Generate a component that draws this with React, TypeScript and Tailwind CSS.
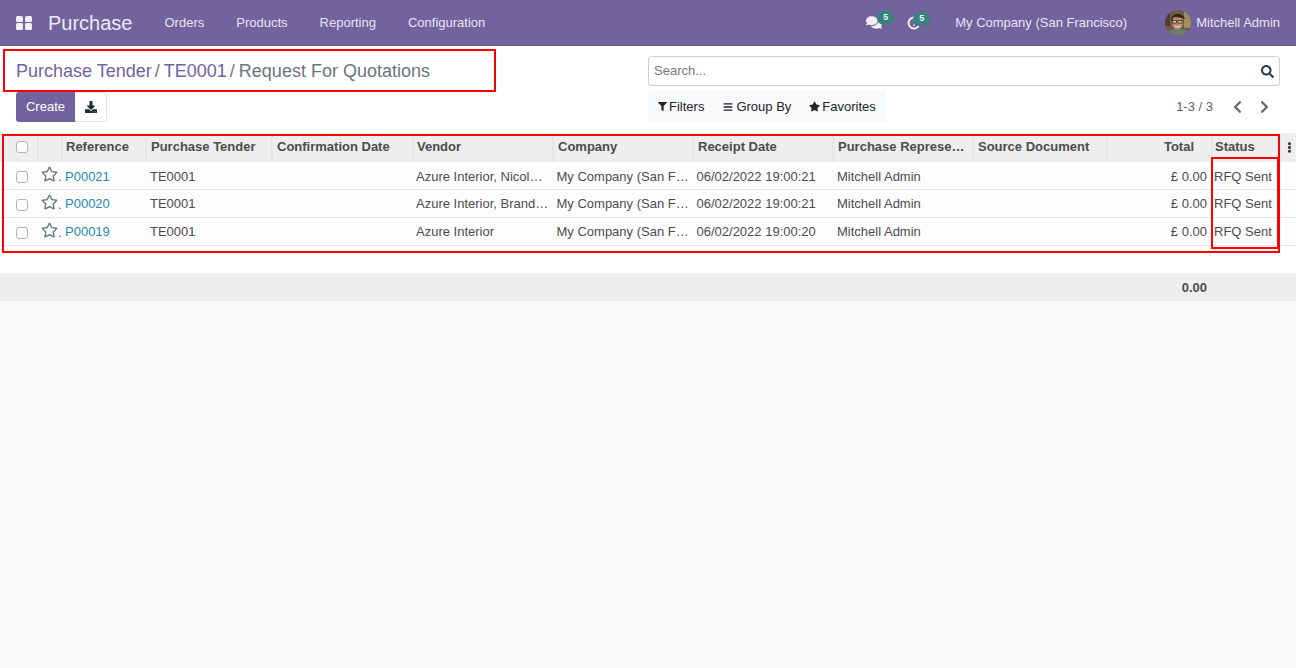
import { FaComments, FaFilter, FaBars, FaStar, FaRegStar, FaSearch, FaDownload, FaChevronLeft, FaChevronRight, FaEllipsisV } from "react-icons/fa";

const cols = [
  { l: "", w: "w-[38px]", c: "" },
  { l: "", w: "w-[24px]", c: "" },
  { l: "Reference", w: "w-[84px]", c: "pl-[3px]" },
  { l: "Purchase Tender", w: "w-[126px]", c: "pl-[4px]" },
  { l: "Confirmation Date", w: "w-[141px]", c: "pl-[4px]" },
  { l: "Vendor", w: "w-[140px]", c: "pl-[3px]" },
  { l: "Company", w: "w-[140px]", c: "pl-[4px]" },
  { l: "Receipt Date", w: "w-[140px]", c: "pl-[4px]" },
  { l: "Purchase Representative", w: "w-[140px]", c: "pl-[4px]" },
  { l: "Source Document", w: "w-[134px]", c: "pl-[4px]" },
  { l: "Total", w: "w-[105px]", c: "pr-[17px] text-right" },
  { l: "Status", w: "w-[67px]", c: "pl-[2px]" },
  { l: "", w: "w-[17px]", c: "" },
];

const rows = [
  { ref: "P00021", vendor: "Azure Interior, Nicole Ford", date: "06/02/2022 19:00:21", h: "h-[27px]" },
  { ref: "P00020", vendor: "Azure Interior, Brandon Freeman", date: "06/02/2022 19:00:21", h: "h-[28px]" },
  { ref: "P00019", vendor: "Azure Interior", date: "06/02/2022 19:00:20", h: "h-[28px]" },
];

function Checkbox() {
  return <span className="block h-3 w-3 rounded-[3px] border border-[#adb5bd] bg-white" />;
}

function Badge({ n, left }: { n: number; left: string }) {
  return (
    <span className={`absolute -top-[4px] ${left} flex h-[14px] w-[17px] items-center justify-center rounded-full bg-[#3b8080] text-[9px] font-bold text-[#e9f2f2]`}>
      {n}
    </span>
  );
}

function Avatar() {
  return (
    <svg viewBox="0 0 26 26" className="h-[26px] w-[26px] shrink-0">
      <clipPath id="av"><circle cx="13" cy="13" r="13" /></clipPath>
      <g clipPath="url(#av)">
        <rect width="26" height="26" fill="#6f5a45" />
        <rect x="19" width="7" height="18" fill="#a48a5e" />
        <rect width="5" height="16" fill="#4e3f33" />
        <path d="M0 26 L3 21 L9 19 L17 19 L23 21 L26 26Z" fill="#6f7a70" />
        <ellipse cx="12.5" cy="12.5" rx="5.5" ry="7" fill="#bb8b6e" />
        <path d="M6 11 C5 3 18 1 20 9 L18 8 C14 8 10 6 8 8Z" fill="#32241c" />
        <rect x="7.5" y="10.5" width="4" height="2.5" fill="#e2c4ae" stroke="#2c211b" strokeWidth="0.7" />
        <rect x="13" y="10.5" width="4" height="2.5" fill="#e2c4ae" stroke="#2c211b" strokeWidth="0.7" />
        <path d="M9.5 16 Q12.5 18 15.5 16" stroke="#f2e6da" strokeWidth="1" fill="none" />
      </g>
    </svg>
  );
}

export default function App() {
  return (
    <div className="flex min-h-[668px] flex-col bg-[#f9f9fb] font-['Liberation_Sans',Arial,sans-serif] text-[13px] text-[#4c4c4c]">
      <nav className="flex h-[46px] shrink-0 items-center border-b border-[#5f5480] bg-[#71639e] text-[#e7e3ef]">
        <span className="ml-4 grid h-[14px] w-4 grid-cols-2 gap-[1.5px]">
          <i className="rounded-[1.5px] bg-white/90" />
          <i className="rounded-[1.5px] bg-white/90" />
          <i className="rounded-[1.5px] bg-white/90" />
          <i className="rounded-[1.5px] bg-white/90" />
        </span>
        <span className="ml-4 text-[20px] text-[#ece9f2]">Purchase</span>
        <div className="ml-[32px] flex gap-8">
          <span>Orders</span>
          <span>Products</span>
          <span>Reporting</span>
          <span>Configuration</span>
        </div>
        <div className="ml-auto flex items-center pr-4">
          <span className="relative mr-[25px] text-white/90">
            <FaComments className="h-[15px] w-[16px]" />
            <Badge n={5} left="left-[11px]" />
          </span>
          <span className="relative mr-[34px] text-white/90">
            <svg viewBox="0 0 14 14" className="h-[14px] w-[14px]" fill="none" stroke="currentColor" strokeWidth="2">
              <path d="M7 1.5 A5.5 5.5 0 1 0 12.5 7" />
              <path d="M6 9h2" strokeWidth="1" />
            </svg>
            <Badge n={5} left="left-[6px]" />
          </span>
          <span className="mr-[38px]">My Company (San Francisco)</span>
          <Avatar />
          <span className="ml-[5px]">Mitchell Admin</span>
        </div>
      </nav>

      <div className="flex h-[87px] shrink-0 justify-between bg-white pl-4 pr-4">
        <div className="w-[632px]">
          <div className="flex h-[50px] items-center text-[18px] text-[#6c757d]">
            <span className="text-[#71639e]">Purchase Tender</span>
            <span className="ml-[3px] mr-[4px]">/</span>
            <span className="text-[#71639e]">TE0001</span>
            <span className="ml-[3px] mr-[4px]">/</span>
            <span>Request For Quotations</span>
          </div>
          <div className="-mt-[4px] flex">
            <button className="h-[30px] w-[59px] rounded-l-[3px] bg-[#71639e] text-white">Create</button>
            <button className="flex h-[30px] w-[32px] items-center justify-center rounded-r-[3px] border border-[#e4e4e4] border-l-0 bg-white text-[#1f2a3a]">
              <FaDownload className="h-3 w-3" />
            </button>
          </div>
        </div>
        <div className="w-[632px] pt-[10px]">
          <div className="flex h-[30px] items-center justify-between rounded-[3px] border border-[#cfcfcf] bg-white pl-[5px] pr-[5px]">
            <span className="text-[#777]">Search...</span>
            <FaSearch className="h-[13px] w-[13px] text-[#2f3b4a]" />
          </div>
          <div className="mt-[5px] flex items-center justify-between">
            <div className="flex h-[31px] items-center rounded-[3px] bg-[#f8f9fa] px-[10px] text-[#212529]">
              <FaFilter className="mr-[2px] h-[9px] w-[9px]" />
              <span>Filters</span>
              <FaBars className="ml-[19px] mr-[3px] h-[10px] w-[10px]" />
              <span>Group By</span>
              <FaStar className="ml-[18px] mr-[2px] h-[11px] w-[11px]" />
              <span>Favorites</span>
            </div>
            <div className="flex items-center">
              <span className="mr-[20px] text-[#5f5f5f]">1-3 / 3</span>
              <FaChevronLeft className="mr-[18px] h-[14px] w-[9px] text-[#666]" />
              <FaChevronRight className="mr-[11px] h-[14px] w-[9px] text-[#666]" />
            </div>
          </div>
        </div>
      </div>

      <div className="bg-white pb-[27px]">
        <table className="w-[1296px] table-fixed border-collapse">
          <thead>
            <tr className="h-[29px] bg-[#eeeeee] text-left font-bold text-[#4c4c4c]">
              {cols.map((c, i) => (
                <th key={i} className={`${c.w} overflow-hidden border-l-2 border-[#e6e6e6] pb-[1px] first:border-l-0 ${c.c || "pl-[3px]"}`}>
                  {i === 0 ? (
                    <span className="ml-[13px] block"><Checkbox /></span>
                  ) : i === 12 ? (
                    <FaEllipsisV className="ml-[1px] h-[11px] w-[11px] text-[#333]" />
                  ) : (
                    <span className="block truncate">{c.l}</span>
                  )}
                </th>
              ))}
            </tr>
          </thead>
          <tbody>
            {rows.map((r) => (
              <tr key={r.ref} className={`${r.h} border-b border-[#e6e6e6] bg-[#fdfdfd]`}>
                <td className="pl-4 pt-[4px]"><Checkbox /></td>
                <td className="overflow-hidden pl-[3px]">
                  <span className="flex items-end">
                    <FaRegStar className="mb-[3px] h-[16px] w-[17px] shrink-0 text-[#6f7a88]" />
                    <span className="mb-[2px] leading-none">.</span>
                  </span>
                </td>
                <td className="whitespace-nowrap pl-[3px] pt-[2px] text-[#1f8bb0]">{r.ref}</td>
                <td className="pl-[4px] pt-[2px]">TE0001</td>
                <td />
                <td className="truncate pl-[3px] pr-[4px] pt-[2px]">{r.vendor}</td>
                <td className="truncate pl-[3.5px] pr-[3px] pt-[2px]">My Company (San Francisco)</td>
                <td className="truncate pl-[3.5px] pt-[2px]">{r.date}</td>
                <td className="pl-[4px] pt-[2px]">Mitchell Admin</td>
                <td />
                <td className="pr-[5px] pt-[2px] text-right">£ 0.00</td>
                <td className="whitespace-nowrap pl-[2px] pt-[2px]">RFQ Sent</td>
                <td />
              </tr>
            ))}
          </tbody>
        </table>
      </div>

      <div className="flex h-[28px] shrink-0 items-center justify-end bg-[#eeeeee] pr-[89px] pt-[2px] font-bold text-[#4c4c4c]">0.00</div>

      <div aria-hidden className="pointer-events-none absolute left-[3px] top-[49px] h-[43px] w-[493px] border-2 border-[#ff0000]" />
      <div aria-hidden className="pointer-events-none absolute left-[2px] top-[134px] h-[119px] w-[1278px] border-2 border-[#ff0000]" />
      <div aria-hidden className="pointer-events-none absolute left-[1211px] top-[157px] h-[92px] w-[68px] border-2 border-[#ff0000]" />
    </div>
  );
}
